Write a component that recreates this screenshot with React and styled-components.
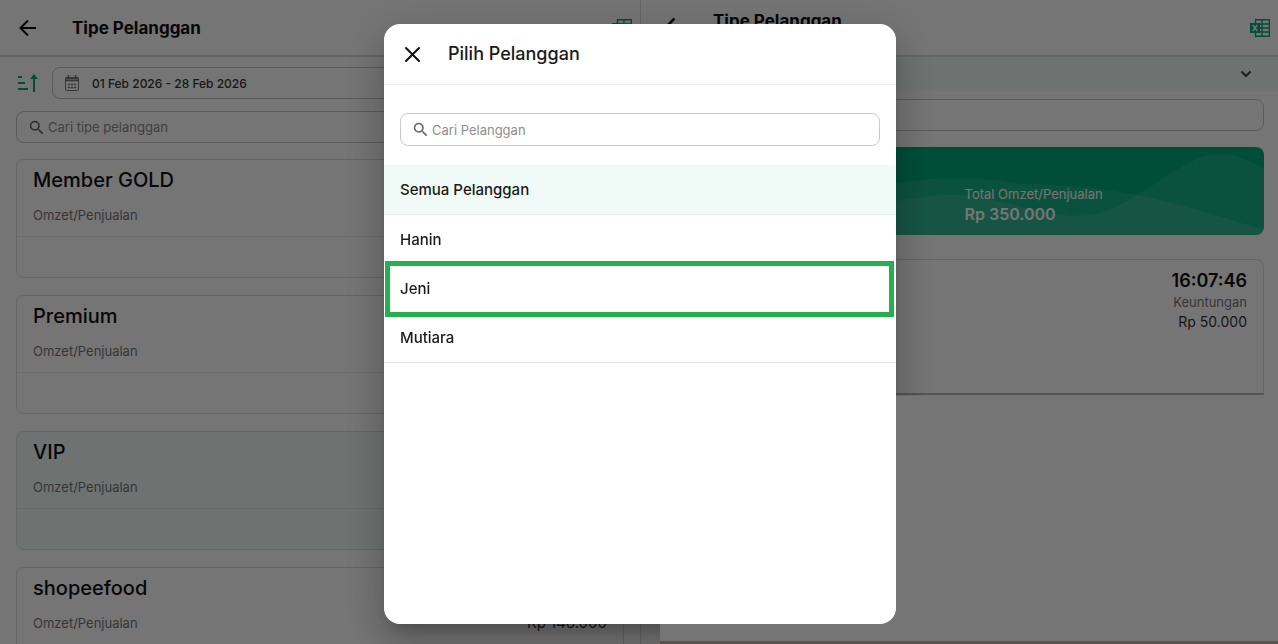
import React, { useState } from 'react';
import styled, { createGlobalStyle } from 'styled-components';

const GlobalStyle = createGlobalStyle`
    * {
        box-sizing: border-box;
    }
    body {
        margin: 0;
        overflow: hidden;
        background: #ffffff;
        color: #1a1a1a;
        font-family: Inter, "Open Sans", sans-serif;
    }
    h1, h2, h3, p, ul {
        margin: 0;
        padding: 0;
    }
    button, input {
        font-family: inherit;
    }
`;

const Page = styled.div`
    display: grid;
    grid-template-columns: 640fr 638fr;
    height: 100vh;
    overflow: hidden;
`;

const Pane = styled.section`
    min-width: 0;
    border-left: ${({ $divided }) => ($divided ? '1px solid #dddddd' : 'none')};
`;

const PaneHeader = styled.header`
    display: flex;
    align-items: center;
    height: 57px;
    padding: 0 6px 0 16px;
    border-bottom: 2px solid #dcdcdc;
`;

const PaneTitle = styled.h1`
    flex: 1;
    margin-left: 32px;
    padding-bottom: ${({ $raised }) => ($raised ? '14px' : '0')};
    font-size: 17px;
    line-height: 24px;
    font-weight: 700;
    color: #111111;
`;

const IconButton = styled.button`
    display: flex;
    align-items: center;
    justify-content: center;
    flex: none;
    width: 24px;
    height: 24px;
    padding: 0;
    border: none;
    background: none;
    color: ${({ $color }) => $color || '#111111'};
    cursor: pointer;
`;

const Filters = styled.div`
    display: flex;
    flex-direction: column;
    gap: 12px;
    padding: 10px 16px 16px;
`;

const FilterRow = styled.div`
    display: flex;
    align-items: center;
    gap: 12px;
`;

const DateButton = styled.button`
    display: flex;
    align-items: center;
    flex: 1;
    gap: 12px;
    height: 32px;
    padding: 0 11px;
    border: 1px solid #c4c4c4;
    border-radius: 8px;
    background: none;
    color: #333333;
    font-size: 12px;
    font-weight: 500;
    text-align: left;
`;

const SearchBox = styled.label`
    display: flex;
    align-items: center;
    gap: 4px;
    height: ${({ $tall }) => ($tall ? '33px' : '32px')};
    padding: 0 12px;
    border: 1px solid ${({ $tall }) => ($tall ? '#c6caca' : '#c4c4c4')};
    border-radius: 8px;
    color: #666666;
`;

const SearchInput = styled.input`
    flex: 1;
    min-width: 0;
    padding: 0;
    border: none;
    outline: none;
    background: none;
    font-size: 13px;
    color: #333333;

    &::placeholder {
        color: #8e8e8e;
        opacity: 1;
    }
`;

const TypeList = styled.ul`
    display: flex;
    flex-direction: column;
    gap: 17px;
    padding: 0 16px;
    list-style: none;
`;

const TypeCard = styled.li`
    height: 119px;
    border: 1px solid #dcdcdc;
    border-radius: 8px;
    background: ${({ $active }) => ($active ? '#f0faf7' : '#ffffff')};
`;

const TypeBody = styled.div`
    height: 77px;
    padding: 7px 16px;
    border-bottom: 1px solid #e8e8e8;
`;

const TypeName = styled.h2`
    margin-bottom: 12px;
    font-size: 20px;
    line-height: 26px;
    font-weight: 500;
    color: #111111;
`;

const TypeRow = styled.div`
    display: flex;
    justify-content: space-between;
    font-size: 13px;
    line-height: 20px;
    color: #777777;
`;

const Amount = styled.span`
    font-size: 15px;
    color: #333333;
`;

const Strip = styled.div`
    display: flex;
    align-items: center;
    justify-content: flex-end;
    height: 34px;
    padding-right: 20px;
    background: #f0faf7;
`;

const Detail = styled.div`
    display: flex;
    flex-direction: column;
    gap: 16px;
    padding: 8px 14px 0 16px;
`;

const Summary = styled.div`
    position: relative;
    display: grid;
    grid-template-columns: 1fr 1fr;
    gap: 8px;
    height: 88px;
    padding: 37px 16px 0;
    overflow: hidden;
    border-radius: 8px;
    background: #00aa7b;
    color: #ffffff;
`;

const Waves = styled.svg`
    position: absolute;
    inset: 0;
    width: 100%;
    height: 100%;
`;

const Total = styled.div`
    position: relative;
    grid-column: 2;
    font-size: 13px;
    line-height: 20px;
`;

const TotalValue = styled.strong`
    display: block;
    font-size: 16px;
    font-weight: 600;
`;

const Transaction = styled.article`
    height: 136px;
    margin-top: 8px;
    padding: 10px 16px;
    border: 1px solid #dcdcdc;
    border-bottom: 2px solid #b8b8b8;
    border-radius: 8px 8px 0 0;
    text-align: right;
    font-size: 13px;
    line-height: 20px;
    color: #777777;
`;

const Time = styled.h2`
    font-size: 18px;
    line-height: 22px;
    font-weight: 600;
    color: #111111;
`;

const Profit = styled.p`
    font-size: 14px;
    color: #333333;
`;

const Overlay = styled.div`
    position: fixed;
    inset: 0;
    z-index: 1;
    display: flex;
    justify-content: center;
    padding: 24px 16px 20px 18px;
    background: rgba(0, 0, 0, 0.54);
`;

// empty lower part of the detail pane, stays flat next to the dialog
const Blank = styled.div`
    position: absolute;
    top: 396px;
    right: 0;
    bottom: 0;
    left: calc(50% + 21px);
    border-bottom: 3px solid #565353;
    background: #757575;
`;

const Dialog = styled.div`
    position: relative;
    width: 100%;
    max-width: 512px;
    border-radius: 16px;
    background: #ffffff;

    &::before {
        content: '';
        position: absolute;
        inset: 0;
        z-index: -1;
        border-radius: 16px;
        box-shadow: 0 11px 15px -7px rgba(0, 0, 0, 0.2), 0 24px 38px 3px rgba(0, 0, 0, 0.14), 0 9px 46px 8px rgba(0, 0, 0, 0.12);
    }
`;

const DialogHeader = styled.header`
    display: flex;
    align-items: center;
    gap: 24px;
    height: 61px;
    padding: 0 16px;
    border-bottom: 1px solid #ececec;
`;

const DialogTitle = styled.h2`
    font-size: 18px;
    line-height: 24px;
    font-weight: 500;
`;

const DialogSearch = styled.div`
    padding: 28px 16px 19px;
`;

const CustomerList = styled.ul`
    list-style: none;
    border-bottom: 1px solid #e8e8e8;
`;

const CustomerButton = styled.button`
    position: relative;
    display: block;
    width: 100%;
    height: ${({ $all }) => ($all ? '50px' : '49px')};
    padding: 0 16px;
    border: none;
    border-bottom: ${({ $all }) => ($all ? '1px solid #e3ecea' : 'none')};
    background: ${({ $all }) => ($all ? '#f0faf7' : 'none')};
    color: #1a1a1a;
    font-size: 15px;
    font-weight: 500;
    text-align: left;
    cursor: pointer;

    /* thick frame drawn around the chosen customer */
    &::after {
        content: '';
        display: ${({ $marked }) => ($marked ? 'block' : 'none')};
        position: absolute;
        inset: -3px 2px -4px 1px;
        border: 5px solid #22b14c;
    }
`;

const types = [
    { name: 'Member GOLD' },
    { name: 'Premium' },
    { name: 'VIP', active: true },
    { name: 'shopeefood', amount: 'Rp 146.000' },
];

const customers = ['Semua Pelanggan', 'Hanin', 'Jeni', 'Mutiara'];

const BackIcon = () => (
    <svg width="24" height="24" viewBox="0 0 24 24" fill="none" stroke="currentColor" strokeWidth="2">
        <path d="M20 12H5M12 4.5 4.5 12l7.5 7.5" />
    </svg>
);

const BackChevronIcon = () => (
    <svg width="24" height="24" viewBox="0 0 24 24" fill="none" stroke="currentColor" strokeWidth="2.5">
        <path d="M17.5 2.5 8 12l9.500 9.500" />
    </svg>
);

const CloseIcon = () => (
    <svg width="24" height="24" viewBox="0 0 24 24" fill="none" stroke="currentColor" strokeWidth="2" strokeLinecap="round">
        <path d="M6 6l13 13M19 6 6 19" />
    </svg>
);

const SearchIcon = () => (
    <svg width="15" height="15" viewBox="2 2 19.5 19.5" fill="currentColor">
        <path d="M15.5 14h-.79l-.28-.27A6.471 6.471 0 0 0 16 9.500 6.500 6.500 0 1 0 9.500 16c1.610 0 3.090-.59 4.230-1.570l.27.28v.79l5 4.990L20.490 19l-4.990-5zm-6 0C7.010 14 5 11.990 5 9.500S7.010 5 9.500 5 14 7.010 14 9.500 11.990 14 9.500 14z" />
    </svg>
);

const SortIcon = () => (
    <svg width="24" height="24" viewBox="0 0 24 24" fill="none" stroke="currentColor" strokeWidth="2">
        <path d="M2 6h4M2 12h7M2 18h10M18 21V7" />
        <path d="M14 8h8l-4-5z" fill="currentColor" stroke="none" />
    </svg>
);

const CalendarIcon = () => (
    <svg width="16" height="16" viewBox="0 0 16 16" fill="none" stroke="#777777">
        <rect x="1.500" y="2.500" width="13" height="13" rx="1" />
        <path d="M1.500 3.500h13M1.500 5.500h13M4.500 0v3M11.500 0v3" strokeWidth="1.500" />
        <path d="M4 9.500h8M4 12.500h8" strokeWidth="1.500" strokeDasharray="2 1" />
    </svg>
);

const ExcelIcon = () => (
    <svg width="20" height="18" viewBox="0 0 20 18" fill="none">
        <path d="M5.500.7h13.800v16.600H5.500zM12 .7v16.600M5.500 5h13.800M5.500 9h13.800M5.500 13h13.800" stroke="#00aa7b" strokeWidth="1.400" />
        <path d="M0 4h10v10H0z" fill="#00aa7b" />
        <path d="M2.800 6l4.400 6M7.200 6l-4.400 6" stroke="#ffffff" strokeWidth="1.500" />
    </svg>
);

const ChevronIcon = () => (
    <svg width="24" height="24" viewBox="0 0 24 24" fill="none" stroke="#444444" strokeWidth="2">
        <path d="M7.500 9.500 12 14l4.500-4.500" />
    </svg>
);

function PaneTop({ raised }) {
    return (
        <PaneHeader>
            <IconButton aria-label="Kembali">{raised ? <BackChevronIcon /> : <BackIcon />}</IconButton>
            <PaneTitle $raised={raised}>Tipe Pelanggan</PaneTitle>
            <IconButton aria-label="Excel"><ExcelIcon /></IconButton>
        </PaneHeader>
    )
}

function App() {
    const [search, setSearch] = useState('');
    const [selected, setSelected] = useState('Jeni');

    return (
        <>
            <GlobalStyle />
            <Page>
                <Pane>
                    <PaneTop />
                    <Filters>
                        <FilterRow>
                            <IconButton $color="#00aa7b" aria-label="Urutkan"><SortIcon /></IconButton>
                            <DateButton><CalendarIcon />01 Feb 2026 - 28 Feb 2026</DateButton>
                        </FilterRow>
                        <SearchBox>
                            <SearchIcon />
                            <SearchInput placeholder="Cari tipe pelanggan" aria-label="Cari tipe pelanggan" />
                        </SearchBox>
                    </Filters>
                    <TypeList>
                        {types.map((type) => (
                            <TypeCard key={type.name} $active={type.active}>
                                <TypeBody>
                                    <TypeName>{type.name}</TypeName>
                                    <TypeRow>
                                        Omzet/Penjualan
                                        {type.amount && <Amount>{type.amount}</Amount>}
                                    </TypeRow>
                                </TypeBody>
                            </TypeCard>
                        ))}
                    </TypeList>
                </Pane>
                <Pane $divided>
                    <PaneTop raised />
                    <Strip>
                        <IconButton aria-label="Buka"><ChevronIcon /></IconButton>
                    </Strip>
                    <Detail>
                        <SearchBox>
                            <SearchInput aria-label="Cari" />
                        </SearchBox>
                        <Summary>
                            <Waves viewBox="0 0 608 88" preserveAspectRatio="none" fill="#ffffff" fillOpacity="0.1">
                                <path d="M0 55C60 70 120 62 180 62c50-2 90-20 140-12s90 28 130 14 80-58 114-57c18 0 32 8 44 15v66H0z" />
                                <path d="M0 40c60-25 120 10 180 14 60-24 120-28 185-17 100 0 165 22 243 46v5H0z" />
                            </Waves>
                            <Total>
                                Total Omzet/Penjualan
                                <TotalValue>Rp 350.000</TotalValue>
                            </Total>
                        </Summary>
                        <Transaction>
                            <Time>16:07:46</Time>
                            <p>Keuntungan</p>
                            <Profit>Rp 50.000</Profit>
                        </Transaction>
                    </Detail>
                </Pane>
            </Page>
            <Overlay>
                <Blank />
                <Dialog role="dialog" aria-modal="true" aria-labelledby="dialog-title">
                    <DialogHeader>
                        <IconButton aria-label="Tutup"><CloseIcon /></IconButton>
                        <DialogTitle id="dialog-title">Pilih Pelanggan</DialogTitle>
                    </DialogHeader>
                    <DialogSearch>
                        <SearchBox $tall>
                            <SearchIcon />
                            <SearchInput
                                value={search}
                                onChange={(e) => setSearch(e.target.value)}
                                placeholder="Cari Pelanggan"
                                aria-label="Cari Pelanggan"
                            />
                        </SearchBox>
                    </DialogSearch>
                    <CustomerList>
                        {customers.map((name, i) => (
                            <li key={name}>
                                <CustomerButton $all={i === 0} $marked={name === selected} onClick={() => setSelected(name)}>
                                    {name}
                                </CustomerButton>
                            </li>
                        ))}
                    </CustomerList>
                </Dialog>
            </Overlay>
        </>
    )
}

export default App
